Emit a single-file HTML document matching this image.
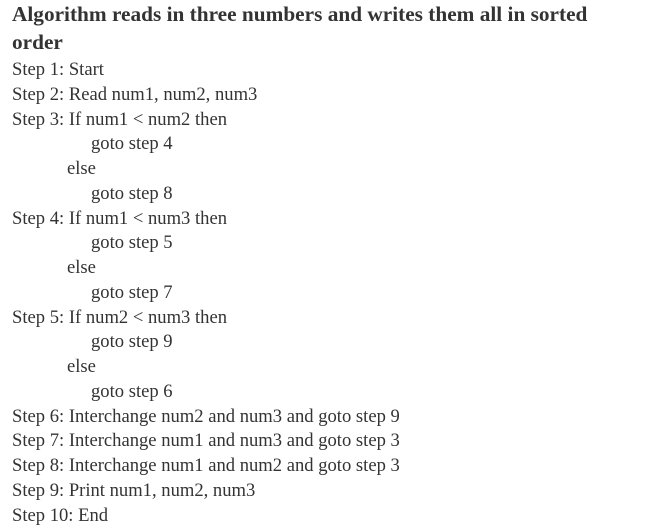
<!DOCTYPE html>
<html><head><style>
html,body{margin:0;padding:0;background:#fff;width:670px;height:530px;overflow:hidden}
body{font-family:"Liberation Serif","Times New Roman",Times,"DejaVu Serif",serif;color:#333;padding-left:12px;padding-top:0px}
h1{font-size:21.3px;font-weight:bold;line-height:28px;margin:0 0 2px 0;width:620px}
p{margin:0;font-size:18.6px;line-height:24.76px;white-space:pre}
.a{padding-left:55px}.b{padding-left:79px}
</style></head><body>
<h1>Algorithm reads in three numbers and writes them all in sorted order</h1>
<p>Step 1: Start</p>
<p>Step 2: Read num1, num2, num3</p>
<p>Step 3: If num1 &lt; num2 then</p>
<p class="b">goto step 4</p>
<p class="a">else</p>
<p class="b">goto step 8</p>
<p>Step 4: If num1 &lt; num3 then</p>
<p class="b">goto step 5</p>
<p class="a">else</p>
<p class="b">goto step 7</p>
<p>Step 5: If num2 &lt; num3 then</p>
<p class="b">goto step 9</p>
<p class="a">else</p>
<p class="b">goto step 6</p>
<p>Step 6: Interchange num2 and num3 and goto step 9</p>
<p>Step 7: Interchange num1 and num3 and goto step 3</p>
<p>Step 8: Interchange num1 and num2 and goto step 3</p>
<p>Step 9: Print num1, num2, num3</p>
<p>Step 10: End</p>
</body></html>
